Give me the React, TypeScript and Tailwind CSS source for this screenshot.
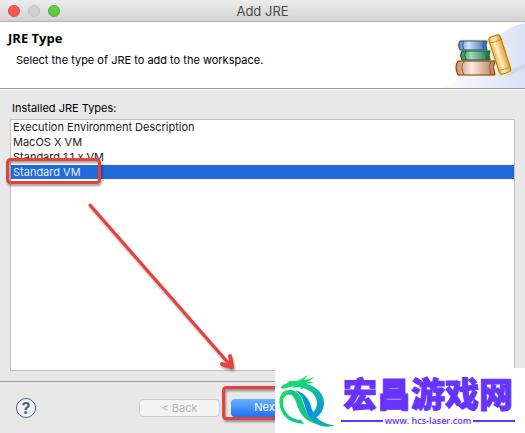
import React, { useState } from "react";

const types = [
  "Execution Environment Description",
  "MacOS X VM",
  "Standard 1.1.x VM",
  "Standard VM",
];

function Books() {
  return (
    <svg className="h-full w-[90px] shrink-0" viewBox="0 0 90 66" preserveAspectRatio="xMaxYMid meet" aria-hidden="true">
      <defs>
        <linearGradient id="sky" x1="0" y1="0" x2="1" y2="0">
          <stop offset="0" stopColor="#fff" />
          <stop offset="1" stopColor="#d9e2f7" />
        </linearGradient>
        <linearGradient id="blue" x1="0" x2="1">
          <stop offset="0" stopColor="#4f80c4" />
          <stop offset=".35" stopColor="#d3e2f6" />
          <stop offset="1" stopColor="#3468b4" />
        </linearGradient>
        <linearGradient id="green" x1="0" x2="1">
          <stop offset="0" stopColor="#23824f" />
          <stop offset=".35" stopColor="#a5dabb" />
          <stop offset="1" stopColor="#177043" />
        </linearGradient>
        <linearGradient id="brown" x1="0" x2="1">
          <stop offset="0" stopColor="#c98a68" />
          <stop offset=".4" stopColor="#fbeadf" />
          <stop offset="1" stopColor="#bd7a55" />
        </linearGradient>
        <linearGradient id="gold" x1="0" x2="1">
          <stop offset="0" stopColor="#eab04e" />
          <stop offset=".4" stopColor="#fdf0c6" />
          <stop offset="1" stopColor="#e09a34" />
        </linearGradient>
      </defs>
      <path d="M0 66C44 62 48 8 90 1V66Z" fill="url(#sky)" />
      <path d="M62 54 90 42V46L76 53Z" fill="#c5c6de" opacity=".5" />
      <g stroke="#f9ef9c" strokeWidth="3" strokeLinejoin="round" fill="#f9ef9c">
        <path d="M25 19H52Q50 23 52 28H25Q22 23 25 19Z" />
        <path d="M27 29H55Q53 33 55 38H27Q24 33 27 29Z" />
        <path d="M23 39H60Q57 45 60 53H23Q19 45 23 39Z" />
        <rect x="-6" y="-20" width="12" height="39" rx="3" transform="translate(65 33) rotate(-18)" />
      </g>
      <path d="M25 19H52Q50 23 52 28H25Q22 23 25 19Z" fill="url(#blue)" stroke="#244f96" />
      <path d="M29 19Q26 23 29 28M49 19Q47 23 49 28" fill="none" stroke="#2c5aa2" />
      <path d="M27 29H55Q53 33 55 38H27Q24 33 27 29Z" fill="url(#green)" stroke="#145f3a" />
      <path d="M31 29Q28 33 31 38M52 29Q50 33 52 38" fill="none" stroke="#17663e" />
      <path d="M23 39H60Q57 45 60 53H23Q19 45 23 39Z" fill="url(#brown)" stroke="#7b3520" />
      <path d="M29 39Q25 45 29 53M56 39Q53 45 56 53" fill="none" stroke="#96533a" />
      <g transform="translate(65 33) rotate(-18)">
        <rect x="-6" y="-20" width="12" height="39" rx="3" fill="url(#gold)" stroke="#b9731d" />
        <path d="M-6-15Q0-13 6-15M-6 14Q0 16 6 14" fill="none" stroke="#cf8a2a" />
      </g>
    </svg>
  );
}

function DragonLogo() {
  return (
    <svg className="h-[54px] w-[56px] shrink-0" viewBox="33 24 168 162" aria-hidden="true">
      <defs>
        <linearGradient id="ring" gradientUnits="userSpaceOnUse" x1="90" y1="45" x2="160" y2="150">
          <stop offset="0" stopColor="#17dc6c" />
          <stop offset="1" stopColor="#0a92e0" />
        </linearGradient>
        <linearGradient id="arc" gradientUnits="userSpaceOnUse" x1="40" y1="80" x2="105" y2="175">
          <stop offset="0" stopColor="#1fe065" />
          <stop offset="1" stopColor="#12bfa0" />
        </linearGradient>
        <linearGradient id="tail" gradientUnits="userSpaceOnUse" x1="80" y1="75" x2="190" y2="182">
          <stop offset="0" stopColor="#0fae9f" />
          <stop offset=".4" stopColor="#0b8be0" />
          <stop offset="1" stopColor="#12b9a4" />
        </linearGradient>
      </defs>
      <path
        d="M38 66C40 58 48 56 56 52L66 44L84 45C94 45 102 38 119 27C116 33 112 37 107 41C118 41 127 38 138 33C132 41 124 45 116 47L137 49C130 53 122 53 115 53C148 62 169 85 168 112C167 135 155 150 138 158L129 143C144 133 149 119 146 104C142 85 128 73 106 67L96 71L100 64L84 64L72 67L78 61L58 65L44 68Z"
        fill="url(#ring)"
      />
      <path
        d="M73 73C50 68 35 82 34 106C34 145 64 174 108 173L99 161C66 161 46 137 45 110C45 94 54 84 68 86C78 88 84 98 88 110C88 92 84 79 73 73Z"
        fill="url(#arc)"
      />
      <path
        d="M60 73C84 68 98 88 105 108C113 133 123 162 153 176C114 168 98 146 89 122C82 101 78 87 60 83Z"
        fill="#14c787"
      />
      <path
        d="M80 73C107 78 121 96 128 118C136 146 150 172 199 178C180 186 158 183 142 171C122 157 116 139 110 119C105 101 98 84 80 73Z"
        fill="url(#tail)"
      />
    </svg>
  );
}

export default function App() {
  const [selected, setSelected] = useState("Standard VM");
  return (
    <main className="relative flex h-screen flex-col overflow-hidden bg-[#e8e8e8] font-[Inter,'Noto_Sans_CJK_SC',sans-serif] text-[11px] text-black">
      <header className="flex h-[22px] shrink-0 items-center border-b border-[#b1b1b1] bg-linear-to-b from-[#ececec] to-[#d3d3d3] px-2">
        <div className="flex gap-2">
          <button aria-label="Close" className="size-3 rounded-full border border-[#df4943] bg-[#f25a54]" />
          <button aria-label="Minimize" className="size-3 rounded-full border border-[#bdbdbd] bg-[#d0d0d0]" />
          <button aria-label="Zoom" className="size-3 rounded-full border border-[#4ab333] bg-[#60cb43]" />
        </div>
        <div className="flex-1 pr-[52px] text-center text-[13px] leading-5 text-[#4a4a4a]">Add JRE</div>
      </header>

      <section className="flex h-[67px] shrink-0 justify-between border-b border-[#999] bg-white">
        <div className="pt-2 pl-2">
          <h1 className="font-['Open_Sans',sans-serif] text-[13px] leading-4 font-bold">JRE Type</h1>
          <p className="mt-1 pl-2 leading-5">Select the type of JRE to add to the workspace.</p>
        </div>
        <Books />
      </section>

      <section className="flex min-h-0 flex-1 flex-col border-t border-white px-[10px] pt-2 pb-[10px]">
        <h2 id="types-label" className="pl-[2px] leading-5">Installed JRE Types:</h2>
        <ul role="listbox" aria-labelledby="types-label" className="mt-[1px] flex-1 border border-[#c0c0c0] bg-white">
          {types.map((type) => (
            <li
              key={type}
              role="option"
              aria-selected={selected === type}
              onClick={() => setSelected(type)}
              className={
                selected === type
                  ? "mb-[1px] h-[14px] bg-[#216ad9] pl-[2px] leading-[14px] text-[#e6effc]"
                  : "mb-[1px] h-[14px] pl-[2px] leading-[14px] text-[#222]"
              }
            >
              {type}
            </li>
          ))}
        </ul>
      </section>

      <footer className="flex h-[52px] shrink-0 items-center border-t border-[#999] px-4">
        <button aria-label="Help" className="flex size-5 items-center justify-center rounded-full border border-[#4e5f84] bg-[#f3f4f8] text-base font-bold text-[#4e5f84]">?</button>
        <button disabled className="ml-[103px] h-[18px] w-[81px] rounded border border-[#cfcfcf] bg-[#f3f3f3] text-[#b5b5b5]">&lt; Back</button>
        <button className="ml-[11px] h-[18px] w-[81px] rounded bg-linear-to-b from-[#68b1fa] to-[#1a6ff5] text-white">Next &gt;</button>
      </footer>

      <svg className="pointer-events-none absolute inset-0 h-full w-full" aria-hidden="true">
        <g fill="none" stroke="#e8403a" strokeWidth="3" strokeLinecap="round" strokeLinejoin="round" className="drop-shadow-[1px_2px_1px_#0006]">
          <rect x="7.5" y="159.5" width="92" height="23" rx="3" />
          <rect x="223.5" y="387.5" width="110" height="31" rx="3" />
          <path d="M90 205 231 366" />
          <path d="M222 364 232 367 230 356" strokeWidth="4" />
        </g>
      </svg>

      <aside className="absolute right-0 bottom-0 flex h-[65px] w-[250px] items-center bg-white pr-1 pl-1 text-[#6633ff]">
        <DragonLogo />
        <div className="flex flex-1 flex-col items-center">
          <strong className="text-[34px] leading-10 font-black whitespace-nowrap [-webkit-text-stroke:1px_#6633ff] [paint-order:stroke] [stroke-linejoin:round]">宏昌游戏网</strong>
          <div className="flex w-[174px] items-center gap-[2px] font-['Open_Sans',sans-serif] text-[9px] leading-3 font-semibold">
            <span className="h-[2px] flex-1 bg-[#6633ff]" />
            <span>www. hcs-laser.com</span>
            <span className="h-[2px] flex-1 bg-[#6633ff]" />
          </div>
        </div>
      </aside>
    </main>
  );
}
